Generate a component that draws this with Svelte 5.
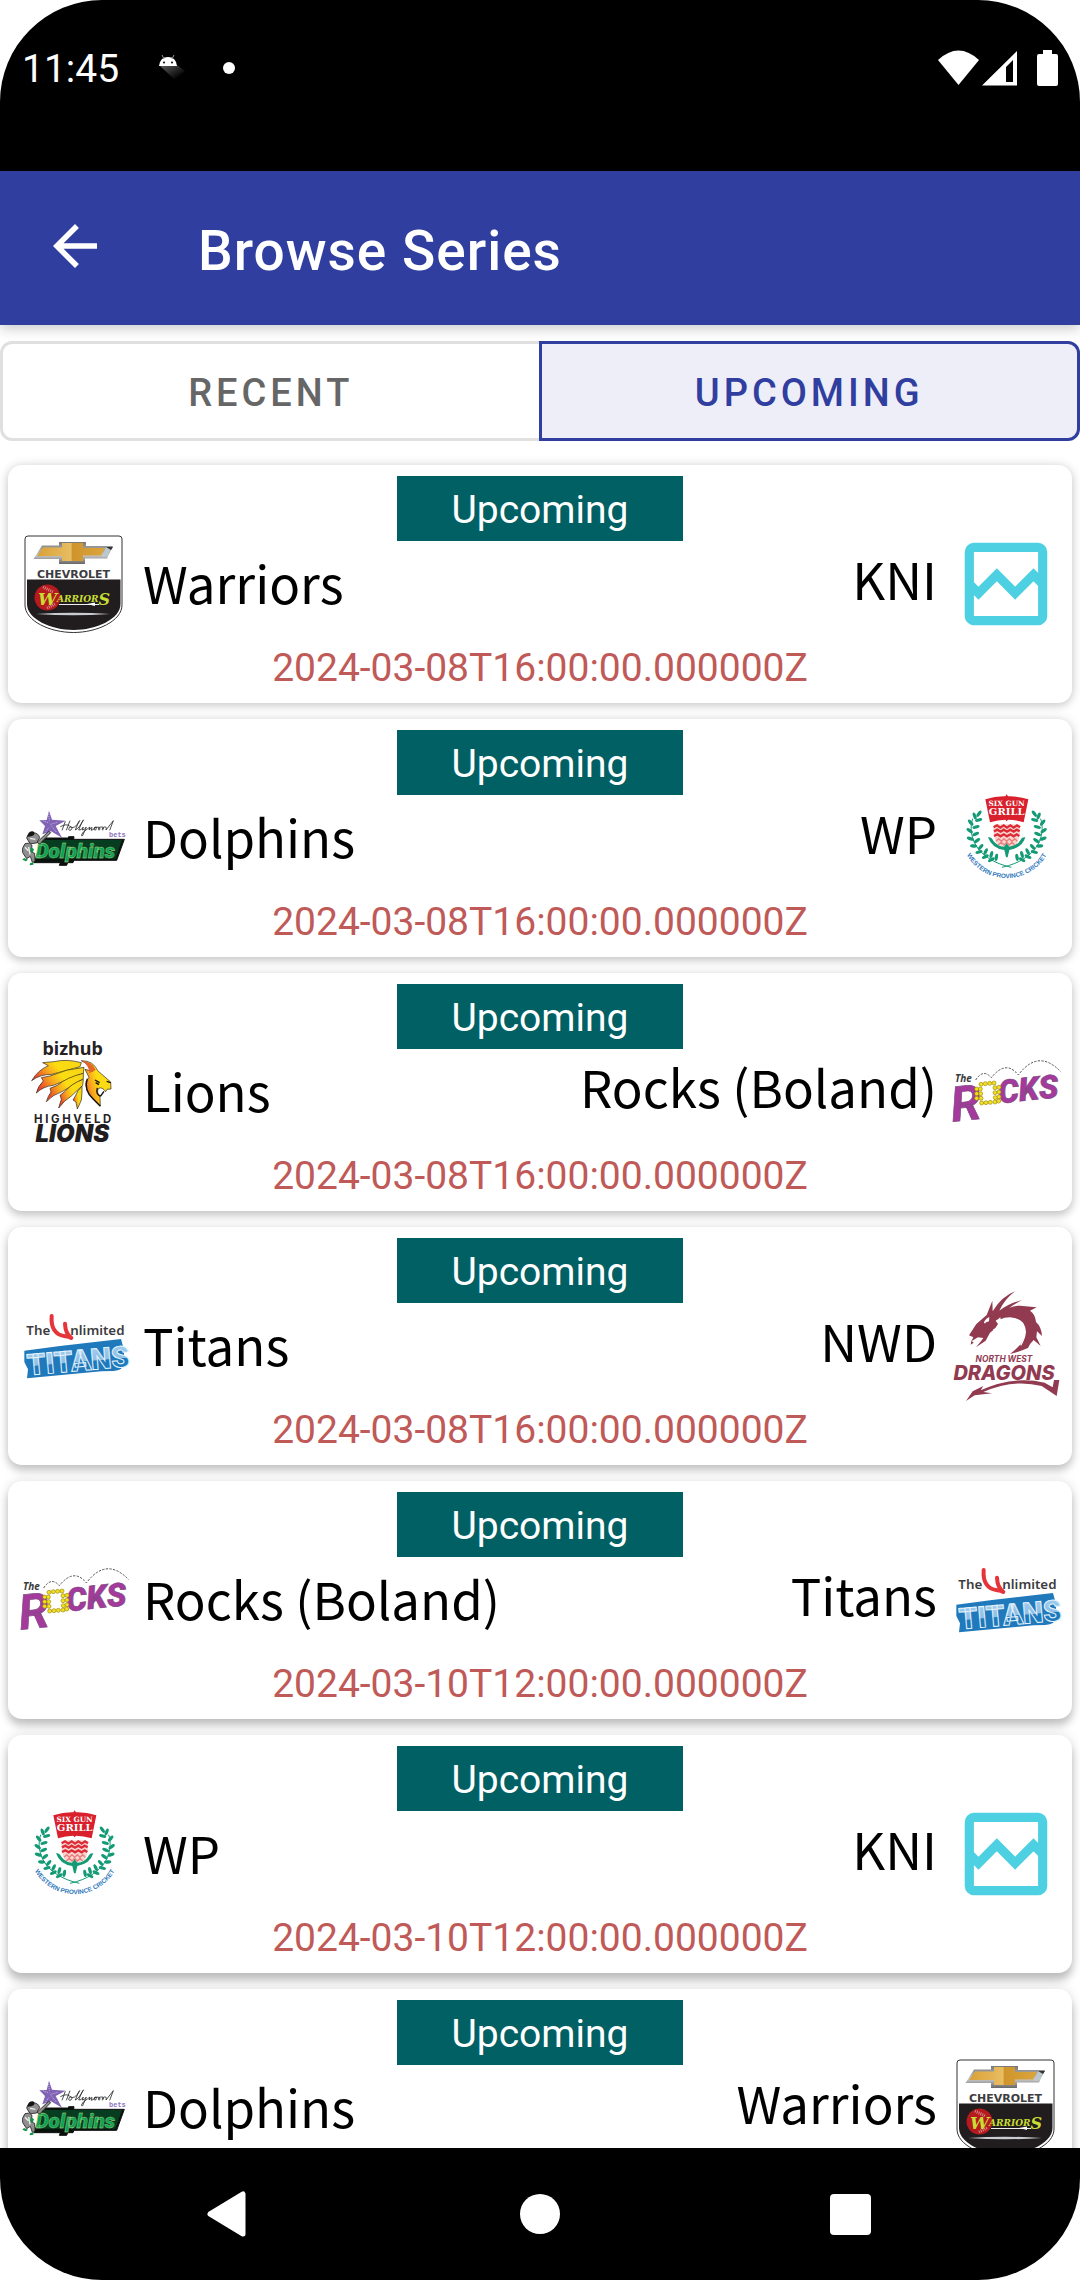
<script>
  const matches = [
    { home: 'Warriors', homeLogo: 'warriors', away: 'KNI', awayLogo: 'none', date: '2024-03-08T16:00:00.000000Z' },
    { home: 'Dolphins', homeLogo: 'dolphins', away: 'WP', awayLogo: 'wp', date: '2024-03-08T16:00:00.000000Z' },
    { home: 'Lions', homeLogo: 'lions', away: 'Rocks (Boland)', awayLogo: 'rocks', date: '2024-03-08T16:00:00.000000Z' },
    { home: 'Titans', homeLogo: 'titans', away: 'NWD', awayLogo: 'dragons', date: '2024-03-08T16:00:00.000000Z' },
    { home: 'Rocks (Boland)', homeLogo: 'rocks', away: 'Titans', awayLogo: 'titans', date: '2024-03-10T12:00:00.000000Z' },
    { home: 'WP', homeLogo: 'wp', away: 'KNI', awayLogo: 'none', date: '2024-03-10T12:00:00.000000Z' },
    { home: 'Dolphins', homeLogo: 'dolphins', away: 'Warriors', awayLogo: 'warriors', date: '2024-03-10T12:00:00.000000Z' }
  ];

  let tab = $state('upcoming');

  // Laurel leaves: [x, y, angle] down the left-hand branch; the right one is mirrored.
  const leaves = [
    [147, 131, -55], [134, 138, -110], [146, 150, -15], [122, 158, -130], [138, 171, -15],
    [119, 182, -145], [137, 192, -25], [121, 206, -160], [141, 212, -35], [131, 228, -175],
    [152, 231, -50], [147, 246, 165], [167, 245, -65], [166, 260, 155], [184, 254, -75], [184, 269, 150], [199, 262, -80]
  ];

  // Beads that form the "O" of the Rocks logo.
  const beads = [
    [153, 163], [166, 161], [179, 160], [192, 159], [151, 177], [195, 173], [152, 191], [195, 188],
    [153, 205], [196, 203], [155, 219], [168, 218], [181, 217], [195, 216],
    [140, 177], [140, 191], [140, 205], [207, 172], [207, 186], [207, 200], [206, 213]
  ];
</script>

{#snippet logo(name)}
  {#if name === 'warriors'}
    <svg class="logo" viewBox="0 0 110 110" role="img" aria-label="Warriors logo">
      <defs>
        <linearGradient id="gold" x1="0" x2="1" y1="0" y2="0">
          <stop offset="0" stop-color="#d9a136" /><stop offset=".5" stop-color="#e8bd62" /><stop offset=".52" stop-color="#cf952c" /><stop offset="1" stop-color="#dba53d" />
        </linearGradient>
        <linearGradient id="steel" x1="0" x2="0" y1="0" y2="1">
          <stop offset="0" stop-color="#777" /><stop offset=".6" stop-color="#c9c9c9" /><stop offset="1" stop-color="#666" />
        </linearGradient>
      </defs>
      <path d="M9 7H100Q103 7 103 10V76C103 92 78 103.500 54.500 103.500S6 92 6 76V10Q6 7 9 7Z" fill="#fff" stroke="#333" />
      <path d="M8 50.500H101.500V75C101.500 90 77 101 54.500 101S8 90 8 75Z" fill="#211c1d" />
      <path d="M23 16.500H40V13H67V17H94L88 29.500H66V35H40V30H14.500Z" fill="url(#steel)" />
      <path d="M24 18.500H43V14H64V19H86L82 26.500H64V32H43V27H18Z" fill="url(#gold)" />
      <path d="M87 18L93 18L87 28H83Z" fill="#bcc8d0" /><path d="M87 18H94L92 21Z" fill="#333" />
      <text x="54.500" y="48.500" class="chev">CHEVROLET</text>
      <circle cx="28.500" cy="68.500" r="13" fill="#b51a1f" />
      <path d="M24 58L34 63M28 79L36 75" stroke="#d98a88" stroke-width="3" stroke-dasharray="1 1" />
      <text x="19" y="76" class="warr"><tspan class="warr-cap">W</tspan><tspan dy="-3">ARRIOR</tspan><tspan class="warr-end" dy="3">S</tspan></text>
      <path d="M40 75.500H80" stroke="#eee" /><path d="M68 75l8-1.500v3.500z" fill="#fff" />
      <path d="M17 85Q54 82.500 91 85Q54 87.500 17 85Z" fill="#c9cdd0" />
    </svg>
  {:else if name === 'dolphins'}
    <svg class="logo" viewBox="57 39 330 330" role="img" aria-label="Dolphins logo">
      <path d="M147 122L156 149L197 152L167 168L186 203L153 184L127 193L135 168L118 151L140 150Z" fill="#8063b4" />
      <path d="M146 132l2 20m-18 1l18 6m24-2l-20 6m-15 22l10-13m22 14l-16-20" stroke="#c9b8e4" stroke-width="3" stroke-dasharray="3 3" />
      <path d="M186 181L196 154M199 181L210 152M181 170Q200 160 209 168M209 170Q202 184 213 180Q220 170 210 170Q222 180 238 155Q242 148 236 155L226 180Q236 176 250 151Q252 146 245 158L236 180Q244 182 250 171L247 180Q254 180 259 171L248 197Q240 200 250 186L270 171L267 180L276 172L274 181Q282 180 285 171Q292 169 288 179Q280 183 284 173Q300 168 300 178Q294 184 296 173Q312 167 310 178Q305 184 308 173Q322 166 318 180L340 152L329 181" fill="none" stroke="#2a2a2a" stroke-width="2.500" />
      <text x="327" y="201" class="bets">bets</text>
      <path d="M129 204L205 204L206 200H222L221 208H373L350 271H222L219 278H203L200 286H178L181 278H102Z" fill="#0a120c" stroke="#111" stroke-width="3" stroke-linejoin="round" />
      <path d="M132 210H366L346 266H108Z" fill="#063d20" />
      <text x="107" y="264" class="dolph">Dolphins</text>
      <g fill="#8f8f8f" stroke="#222" stroke-width="2.500">
        <path d="M80 204Q84 187 100 188Q116 190 119 203L110 219L93 221L87 216Z" />
        <path d="M75 221Q64 234 68 248L80 266L91 259L97 277L105 274L104 250L94 246L96 226L88 219Z" />
        <path d="M111 217L146 184L152 188L119 222Z" />
      </g>
      <path d="M82 200Q84 184 98 184Q106 186 102 195L94 199Z" fill="#151515" />
      <path d="M72 264L84 269L78 274L67 269ZM90 280L101 276L100 284L89 286ZM92 232l10 5-4 12-8-6z" fill="#159145" />
      <path d="M90 205l16 3M75 232l10 10M86 231l4 22" stroke="#eee" stroke-width="4" />
    </svg>
  {:else if name === 'wp'}
    <svg class="logo" viewBox="63 39 330 330" role="img" aria-label="Western Province logo">
      <defs><path id="wp-arc" d="M102 238A138 138 0 0 0 358 238" /></defs>
      <path d="M166 88Q198 78 226 79L230 73L234 79Q264 78 295 88L281 157Q256 149 234 149L230 154L226 149Q204 149 180 157Z" fill="#d9202c" />
      <text x="230" y="109" class="six">SIX GUN</text>
      <text x="230" y="136" class="grill">GRILL</text>
      <path d="M190 172Q190 163 200 163H261Q270 163 270 172Q272 200 260 222Q230 240 201 222Q189 200 190 172Z" fill="#f7d4d0" />
      <path d="M191 172l10-6 10 7 10-7 10 7 10-7 10 7 10-7 9 6M192 184l10-5 10 6 9-6 10 6 10-6 10 6 9-6 9 5M192 198l10-5 10 6 9-6 10 6 10-6 10 6 9-6 8 5" fill="none" stroke="#dc2b35" stroke-width="7" />
      <path d="M198 214l8-8 8 8 8-8 8 8 8-8 8 8 8-8 8 8M204 225l10-8 8 8 8-8 8 8 8-8 8 8" fill="none" stroke="#ea7e7c" stroke-width="4" />
      <path d="M174 202Q184 200 190 212Q202 228 222 230L230 220L238 230Q260 228 270 212Q276 200 286 202Q276 234 238 240L233 262H228L223 240Q186 236 174 202Z" fill="#159a76" />
      <path d="M128 146C112 196 136 268 244 292M332 146C348 196 324 268 216 292" fill="none" stroke="#159a76" stroke-width="3" />
      {#each leaves as [x, y, a]}
        <ellipse cx={x} cy={y} rx="11" ry="5" transform="rotate({a} {x} {y})" fill="#159a76" />
        <ellipse cx={460 - x} cy={y} rx="11" ry="5" transform="rotate({-a} {460 - x} {y})" fill="#159a76" />
      {/each}
      <text class="arc"><textPath href="#wp-arc" startOffset="50%">WESTERN PROVINCE CRICKET</textPath></text>
    </svg>
  {:else if name === 'lions'}
    <svg class="logo" viewBox="57 51 330 330" role="img" aria-label="Lions logo">
      <defs>
        <linearGradient id="mane" x1="0" x2="1" y1=".6" y2=".2">
          <stop offset="0" stop-color="#e8452a" /><stop offset=".3" stop-color="#f8a51e" /><stop offset=".55" stop-color="#fbdd12" /><stop offset="1" stop-color="#f9d616" />
        </linearGradient>
      </defs>
      <text x="218" y="104" class="bizhub">bizhub</text>
      <g fill="url(#mane)" stroke="#2c2418" stroke-width="2">
        <path d="M244 128Q200 116 162 125L128 128L145 137Q112 152 95 182Q120 163 156 163L240 140Z" />
        <path d="M252 142Q200 146 150 168L124 173L130 183Q114 198 109 219Q130 199 160 196L250 160Z" />
        <path d="M250 160Q200 172 172 196L150 205L153 216Q144 228 139 245Q158 224 188 214L250 176Z" />
        <path d="M250 178Q215 190 194 215L180 226L184 238L176 264Q192 242 214 228L248 196Z" />
        <path d="M246 198Q232 212 226 228L219 240L228 246L232 267Q240 250 244 240L246 216Z" />
        <path d="M244 122Q280 122 293 152L332 186L333 207L321 208L317 215Q307 200 296 205Q288 216 300 232L301 258L284 240Q252 210 258 184L267 172L255 148L278 154Q270 134 244 122Z" />
      </g>
      <path d="M262 176Q250 210 280 238L301 259M285 180l14 8M287 188l10 6M320 184l12 4M292 204Q286 224 302 228L312 214" fill="none" stroke="#15110d" stroke-width="4" />
      <path d="M246 123Q278 126 287 150L268 160Q268 136 246 123Z" fill="#e5642c" />
      <text x="222" y="308" class="highveld">HIGHVELD</text>
      <text x="217" y="367" class="lions">LIONS</text>
    </svg>
  {:else if name === 'rocks'}
    <svg class="logo" viewBox="63 21 330 330" role="img" aria-label="Rocks logo">
      <path d="M137 150Q160 115 184 143Q228 88 265 135Q325 55 392 125" fill="none" stroke="#555" stroke-width="3" stroke-dasharray="7 4" />
      <text x="75" y="156" class="the">The</text>
      <g transform="rotate(-6 70 276)">
        <text x="68" y="275" class="rock-r">R</text>
      </g>
      <g transform="rotate(-6 210 220)">
        <text x="208" y="220" class="rock-cks">CKS</text>
      </g>
      {#each beads as [x, y]}
        <circle cx={x} cy={y} r="6" fill="#f4e11d" stroke="#9c8a12" stroke-width="2" />
      {/each}
    </svg>
  {:else if name === 'titans'}
    <svg class="logo" viewBox="57 3 330 330" role="img" aria-label="Titans logo">
      <defs>
        <linearGradient id="ice" x1="0" x2="0" y1="0" y2="1">
          <stop offset="0" stop-color="#a9d0ee" /><stop offset=".52" stop-color="#8dbfe6" /><stop offset=".54" stop-color="#1d79bd" /><stop offset="1" stop-color="#1d79bd" />
        </linearGradient>
      </defs>
      <text x="79" y="134" class="unl">The</text>
      <text x="211" y="134" class="unl">nlimited</text>
      <path d="M155 78Q151 133 196 139Q208 140 214 144M195 101Q196 130 213 143" fill="none" stroke="#e5343a" stroke-width="12" stroke-linecap="round" />
      <path d="M73 182L180 168L363 147L372 180V220Q370 242 340 243L305 244L81 265L84 238L73 216Z" fill="#2079bb" />
      <g transform="rotate(-5 84 254)">
        <text x="84" y="256" class="titans">TITANS</text>
      </g>
    </svg>
  {:else if name === 'dragons'}
    <svg class="logo" viewBox="63 33 330 330" role="img" aria-label="Dragons logo">
      <g fill="#913a50">
        <path d="M117 166L139 132L170 105L187 62L188 94Q214 50 255 34Q222 60 208 92Q240 68 276 61Q240 78 222 100L206 116L197 122L204 132L194 147L180 158L167 182L138 202L153 184L160 174L144 172L124 184L130 172Z" />
        <path d="M208 100Q240 76 270 77L320 82L300 92Q316 102 318 126Q334 140 336 168L321 154L319 172L332 198L311 180Q300 190 294 204Q266 216 240 222Q282 192 286 158Q286 116 240 112Q222 112 212 118Z" />
        <path d="M124 182L131 188L122 194Z" />
      </g>
      <path d="M176 120q-12 0-12 10M212 128Q252 104 278 130Q296 156 272 196M190 150q20-6 16-24" fill="none" stroke="#fff" stroke-width="4" />
      <path d="M178 111L168 117L163 129L177 124Z" fill="#fff" />
      <text x="222" y="245" class="nw">NORTH WEST</text>
      <text x="222" y="299" class="drag">DRAGONS</text>
      <path d="M372 300L388 300L380 348L335 318Q250 296 160 336L186 340L134 346L108 363L128 334L160 318L152 331Q250 286 344 308L368 322Z" fill="#913a50" />
    </svg>
  {:else}
    <svg class="logo" viewBox="0 0 24 24" role="img" aria-label="No logo">
      <rect x="4" y="4" width="16" height="16" rx="1" fill="none" stroke="#4dd0e1" stroke-width="2" />
      <path d="M4 12l2 2 4-4 4 4 4-4 2 2" fill="none" stroke="#4dd0e1" stroke-width="2" />
    </svg>
  {/if}
{/snippet}

<div class="screen">
  <div class="status">
    <span class="time">11:45</span>
    <svg class="droid" viewBox="0 0 30 30" aria-hidden="true">
      <defs>
        <linearGradient id="fade" x1="0" x2="1" y1="0" y2="1"><stop offset=".1" stop-color="#555" /><stop offset=".8" stop-color="#000" /></linearGradient>
      </defs>
      <path d="M1 13L16 27L26 18L18 12Z" fill="url(#fade)" />
      <path d="M0 13Q1 4 9 4T18 13Z" fill="#fff" />
      <path d="M3 2L5 6M15 2L13 6" stroke="#999" />
      <circle cx="5" cy="9.500" r="1" /><circle cx="13" cy="9.500" r="1" />
    </svg>
    <span class="dot"></span>
    <div class="signals">
      <svg width="41" height="36" viewBox="0 0 41 36" aria-hidden="true"><path d="M0 10Q20.500-9 41 10L20.500 35Z" fill="#fff" /></svg>
      <svg class="cell" width="36" height="36" viewBox="0 0 36 36" aria-hidden="true">
        <path fill-rule="evenodd" d="M0 35.500L35 1V35.500ZM24 17V32H31V10Z" fill="#fff" />
      </svg>
      <svg width="21" height="36" viewBox="0 0 21 36" aria-hidden="true"><path d="M6 0H15V4H19Q21 4 21 6V34Q21 36 19 36H2Q0 36 0 34V6Q0 4 2 4H6Z" fill="#fff" /></svg>
    </div>
  </div>

  <header>
    <button class="back" aria-label="Back">
      <svg viewBox="0 0 24 24" aria-hidden="true"><path d="M20 11H7.830l5.590-5.590L12 4l-8 8 8 8 1.410-1.410L7.830 13H20v-2z" fill="#fff" /></svg>
    </button>
    <h1>Browse Series</h1>
  </header>

  <main>
    <div class="tabs">
      <button class:active={tab === 'recent'} aria-pressed={tab === 'recent'} onclick={() => (tab = 'recent')}>RECENT</button>
      <button class:active={tab === 'upcoming'} aria-pressed={tab === 'upcoming'} onclick={() => (tab = 'upcoming')}>UPCOMING</button>
    </div>

    <ul class="list">
      {#each matches as match, i}
        <li class="card" style="--depth: {i}">
          <span class="badge">Upcoming</span>
          <div class="teams">
            {@render logo(match.homeLogo)}
            <span class="name home">{match.home}</span>
            <span class="name away">{match.away}</span>
            {@render logo(match.awayLogo)}
          </div>
          <time>{match.date}</time>
        </li>
      {/each}
    </ul>
  </main>

  <nav>
    <button aria-label="Back"><svg viewBox="0 0 48 48" aria-hidden="true"><path d="M5 24L38 4V44Z" fill="#fff" stroke="#fff" stroke-width="5" stroke-linejoin="round" /></svg></button>
    <button aria-label="Home"><svg viewBox="0 0 48 48" aria-hidden="true"><circle cx="24" cy="24" r="20" fill="#fff" /></svg></button>
    <button aria-label="Recent apps"><svg viewBox="0 0 48 48" aria-hidden="true"><rect x="3" y="4" width="41" height="41" rx="4" fill="#fff" /></svg></button>
  </nav>
</div>

<style>
  :global(body) { background: #fff; }
  .screen {
    display: flex;
    flex-direction: column;
    height: 100vh;
    overflow: hidden;
    border-radius: 102px;
    background: #fff;
    font-family: Roboto, "Liberation Sans", sans-serif;
    color: #000;
  }
  button { border: 0; margin: 0; padding: 0; background: none; font: inherit; cursor: pointer; }
  svg { display: block; flex: none; }

  .status {
    display: flex;
    flex: none;
    align-items: center;
    height: 136px;
    padding: 0 22px 35px;
    background: #000;
    color: #fff;
  }
  .time { padding-top: 2px; font-size: 39px; line-height: 46px; }
  .droid { width: 30px; height: 30px; margin-left: 40px; }
  .dot { width: 12px; height: 12px; margin-left: 34px; border-radius: 50%; background: #fff; }
  .signals { display: flex; gap: 3px; margin-left: auto; }
  .cell { margin-right: 16px; }

  header {
    position: relative;
    display: flex;
    flex: none;
    align-items: center;
    gap: 90px;
    padding: 40px 42px 44px;
    background: #303f9f;
    box-shadow: 0 4px 12px rgba(0, 0, 0, 0.2);
  }
  .back { width: 66px; height: 66px; }
  .back svg { width: 66px; height: 66px; }
  h1 { margin: 0; padding-top: 10px; color: #fff; font-size: 55px; line-height: 60px; font-weight: 500; letter-spacing: 1px; }

  main { flex: 1; min-height: 0; overflow: hidden; }
  .tabs { display: flex; padding-top: 16px; }
  .tabs button {
    flex: 1;
    height: 100px;
    padding-top: 4px;
    border: 3px solid #e0e0e0;
    color: #666;
    font-size: 38px;
    font-weight: 500;
    letter-spacing: 4px;
  }
  .tabs button:first-child { border-radius: 12px 0 0 12px; }
  .tabs button:last-child { margin-left: -3px; border-radius: 0 12px 12px 0; }
  .tabs .active { position: relative; border-color: #303f9f; background: #eeeef8; color: #303f9f; }

  .list { display: grid; gap: 16px; margin: 0; padding: 24px 8px 16px; list-style: none; }
  .card {
    display: flex;
    flex-direction: column;
    align-items: center;
    padding: 11px 11px 12px;
    border-radius: 14px;
    background: #fff;
    box-shadow:
      0 calc(3px + var(--depth) * 1px) 8px rgba(0, 0, 0, calc(0.14 + var(--depth) * 0.015)),
      0 0 12px rgba(0, 0, 0, 0.12);
  }
  .badge { padding: 12px 55px 8px; margin-bottom: -12px; background: #006064; color: #fff; font-size: 39px; line-height: 45px; }
  .teams { display: flex; align-items: center; width: 100%; }
  .logo { width: 110px; height: 110px; overflow: visible; }
  .name { font-family: "Noto Sans CJK JP", "Noto Sans", sans-serif; font-size: 51px; line-height: 64px; white-space: nowrap; }
  .home { padding: 0 0 4px 14px; }
  .away { margin-left: auto; padding: 0 14px 12px 0; }
  time { margin-top: 7px; color: #c05a58; font-size: 39px; line-height: 45px; }

  nav { display: flex; flex: none; justify-content: center; gap: 263px; padding: 42px 0; background: #000; }
  nav button, nav svg { width: 48px; height: 48px; }

  .logo text { font-weight: 700; }
  .logo .chev { font-family: "DejaVu Sans", sans-serif; font-size: 11px; text-anchor: middle; fill: #3d3d3f; }
  .logo .warr { font-family: "DejaVu Serif", serif; font-size: 9px; font-style: italic; fill: #c8dc34; }
  .warr-cap { font-size: 17px; }
  .warr-end { font-size: 16px; }
  .logo .bets { font-family: "Liberation Mono", monospace; font-size: 21px; fill: #8d74c0; }
  .logo .dolph { font-family: Roboto, sans-serif; font-size: 62px; font-weight: 900; font-style: italic; fill: #0ca256; stroke: #c4de86; stroke-width: 1; }
  .logo .six { font-family: "DejaVu Serif", serif; font-size: 22px; text-anchor: middle; fill: #fff; }
  .logo .grill { font-family: "DejaVu Serif", serif; font-size: 30px; text-anchor: middle; fill: #fff; }
  .logo .arc { font-family: "Liberation Sans", sans-serif; font-size: 19px; text-anchor: middle; fill: #2d76bb; }
  .logo .bizhub { font-family: "Noto Sans", sans-serif; font-size: 54px; text-anchor: middle; fill: #262223; }
  .logo .highveld { font-family: Inter, sans-serif; font-size: 34px; letter-spacing: 8px; text-anchor: middle; fill: #262223; }
  .logo .lions { font-family: Inter, sans-serif; font-size: 72px; font-weight: 900; font-style: italic; text-anchor: middle; fill: #211c1d; }
  .logo .the { font-family: "Noto Sans", sans-serif; font-size: 30px; font-style: italic; fill: #3c3c3e; }
  .logo .rock-r { font-family: Roboto, sans-serif; font-size: 146px; font-style: italic; fill: #a33a9c; stroke: #7d4a80; stroke-width: 2; }
  .logo .rock-cks { font-family: Roboto, sans-serif; font-size: 97px; font-weight: 900; font-style: italic; fill: #a33a9c; stroke: #7d4a80; stroke-width: 2; }
  .logo .unl { font-family: "Noto Sans", sans-serif; font-size: 40px; font-weight: 600; fill: #3c3c3e; }
  .logo .titans { font-family: Roboto, sans-serif; font-size: 88px; font-weight: 900; fill: url(#ice); stroke: #e4f2fb; stroke-width: 3; }
  .logo .nw { font-family: Inter, sans-serif; font-size: 25px; font-style: italic; text-anchor: middle; fill: #913a50; }
  .logo .drag { font-family: Inter, sans-serif; font-size: 60px; font-weight: 800; font-style: italic; text-anchor: middle; fill: #913a50; }
</style>
